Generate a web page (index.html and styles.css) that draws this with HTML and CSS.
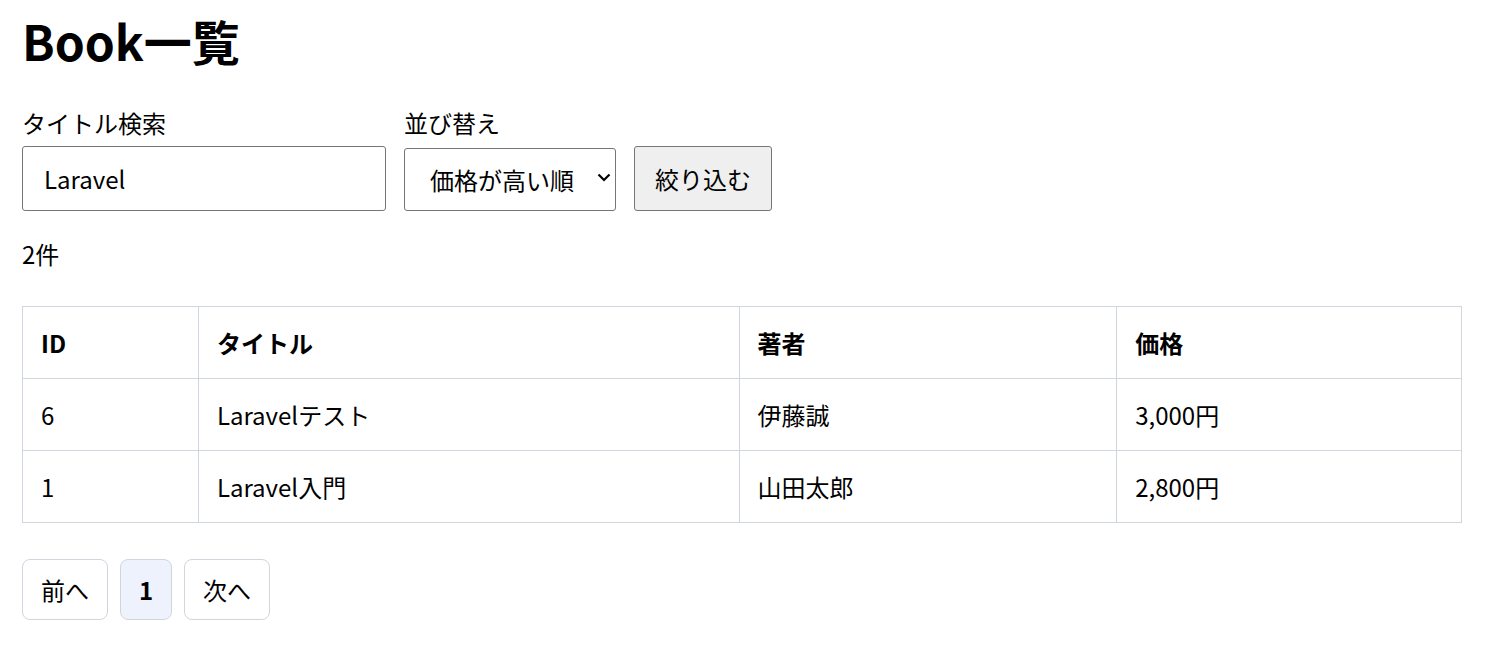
FILE: index.html
```html
<!DOCTYPE html>
<html lang="ja">
<head>
<meta charset="utf-8">
<title>Book一覧</title>
<link rel="stylesheet" href="styles.css">
</head>
<body>
<main class="page">
  <h1 class="title">Book一覧</h1>
  <form class="filter">
    <div class="field">
      <label class="label" for="q">タイトル検索</label>
      <input class="input" id="q" type="text" value="Laravel">
    </div>
    <div class="field">
      <label class="label" for="sort">並び替え</label>
      <span class="select-wrap">
        <select class="select" id="sort">
          <option>価格が高い順</option>
        </select>
        <svg class="chevron" viewBox="0 0 14 9" width="14" height="9"><path d="M1.5 1.5 L7 7 L12.5 1.5" fill="none" stroke="#000" stroke-width="2.2"/></svg>
      </span>
    </div>
    <button class="btn" type="button">絞り込む</button>
  </form>
  <p class="count">2件</p>
  <table class="table">
    <colgroup>
      <col class="c-id"><col class="c-title"><col class="c-author"><col class="c-price">
    </colgroup>
    <thead>
      <tr><th>ID</th><th>タイトル</th><th>著者</th><th>価格</th></tr>
    </thead>
    <tbody>
      <tr><td>6</td><td>Laravelテスト</td><td>伊藤誠</td><td>3,000円</td></tr>
      <tr><td>1</td><td>Laravel入門</td><td>山田太郎</td><td>2,800円</td></tr>
    </tbody>
  </table>
  <nav class="pager">
    <a class="page-btn">前へ</a>
    <a class="page-btn active">1</a>
    <a class="page-btn">次へ</a>
  </nav>
</main>
</body>
</html>
```

FILE: styles.css
```css
* { box-sizing: border-box; }
html, body { margin: 0; padding: 0; background: #fff; }
body {
  font-family: "Noto Sans CJK JP", "Noto Sans", sans-serif;
  font-size: 24px;
  color: #000;
}
.page { padding: 0 22px; }
.title {
  font-size: 48px;
  font-weight: 700;
  line-height: 1.4;
  margin: 7px 0 0 0;
}
.filter {
  display: flex;
  align-items: flex-end;
  gap: 18px;
  margin-top: 31px;
}
.field { display: flex; flex-direction: column; }
.label { font-size: 24px; line-height: 36px; margin-bottom: 7px; }
.input {
  width: 364px;
  height: 65px;
  font: inherit;
  font-size: 24px;
  padding: 0 21px;
  border: 1px solid #767676;
  border-radius: 3px;
  margin-top: -2px;
}
.select-wrap { position: relative; display: block; width: 212px; height: 63px; }
.select {
  appearance: none;
  -webkit-appearance: none;
  width: 212px;
  height: 63px;
  font: inherit;
  font-size: 24px;
  padding: 0 0 0 25px;
  background: #fff;
  border: 1px solid #767676;
  border-radius: 3px;
  color: #000;
}
.chevron { position: absolute; right: 5px; top: 25px; pointer-events: none; }
.btn {
  width: 138px;
  height: 65px;
  font: inherit;
  font-size: 24px;
  background: #efefef;
  border: 1px solid #767676;
  border-radius: 3px;
  color: #000;
  padding: 0;
}
.count { margin: 25px 0 0 0; line-height: 36px; }
.table {
  border-collapse: collapse;
  width: 1440px;
  margin-top: 34px;
}
.c-id { width: 176px; }
.c-title { width: 541px; }
.c-author { width: 378px; }
.c-price { width: 345px; }
.table th, .table td {
  border: 1px solid #d0d6de;
  height: 72px;
  padding: 0 18px;
  text-align: left;
  font-size: 24px;
  line-height: 36px;
}
.table th { font-weight: 700; }
.pager {
  display: flex;
  gap: 12px;
  margin-top: 36px;
}
.page-btn {
  display: flex;
  align-items: center;
  justify-content: center;
  height: 61px;
  padding: 0 18px;
  border: 1px solid #d0d6de;
  border-radius: 8px;
  background: #fff;
  color: #000;
}
.page-btn.active {
  background: #eef2fd;
  font-weight: 700;
  padding: 0;
  width: 52px;
}
```
